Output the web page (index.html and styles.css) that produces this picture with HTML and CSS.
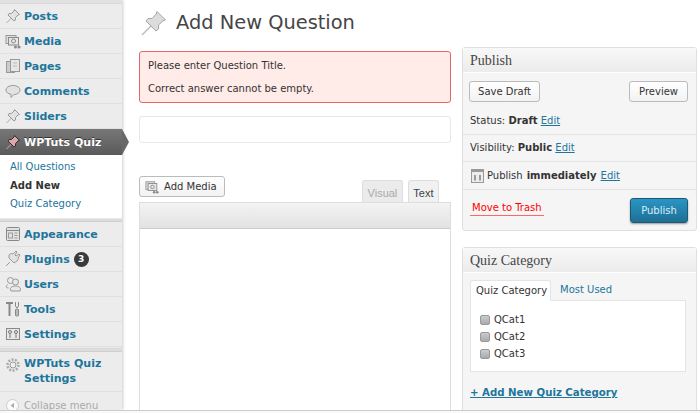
FILE: index.html
```html
<!DOCTYPE html>
<html lang="en">
<head>
  <meta charset="UTF-8" />
  <title>Add New Question</title>
  <link rel="stylesheet" href="styles.css">
</head>
<body>
<div class="page">
  <nav class="menu">
    <div class="menu-top"></div>
    <a class="item"><svg class="ico" viewBox="0 0 16 16"><path d="M1.500 15l5-5" stroke="#aaa"/><path d="M9.500 1.500l5 5-1.500.5-2.500 2.500v2.500l-1.500 1-6-6 1-1.500h2.500l2.500-2.500z" fill="#e2e2e2" stroke="#999"/></svg>Posts</a>
    <a class="item"><svg class="ico" viewBox="0 0 16 16"><rect x="1" y="2.500" width="10" height="8" fill="#ddd" stroke="#999"/><rect x="3.500" y="4.500" width="10" height="7.500" fill="#e6e6e6" stroke="#888"/><circle cx="8.500" cy="8" r="2" fill="none" stroke="#888"/><circle cx="10.500" cy="14" r="1.500" fill="#888"/><circle cx="14" cy="14" r="1.500" fill="#888"/></svg>Media</a>
    <a class="item"><svg class="ico" viewBox="0 0 16 16"><rect x="1.500" y="3.500" width="8" height="11" fill="#ccc" stroke="#999"/><rect x="5.500" y="1.500" width="9" height="12" fill="#e6e6e6" stroke="#999"/><path d="M8 5h4M8 8h4" stroke="#bbb"/></svg>Pages</a>
    <a class="item"><svg class="ico" viewBox="0 0 16 16"><path d="M8 2.500c4 0 7 2 7 4.500s-3 4.500-6 4.500l-3 3v-3.200c-3-.5-5-2-5-4.300 0-2.500 3-4.500 7-4.500z" fill="#e2e2e2" stroke="#999"/></svg>Comments</a>
    <a class="item"><svg class="ico" viewBox="0 0 16 16"><path d="M1.500 15l5-5" stroke="#aaa"/><path d="M9.500 1.500l5 5-1.500.5-2.500 2.500v2.500l-1.500 1-6-6 1-1.500h2.500l2.500-2.500z" fill="#e2e2e2" stroke="#999"/></svg>Sliders</a>
    <a class="item item-current"><svg class="ico" viewBox="0 0 16 16"><path d="M1.500 15l5-5" stroke="#c9b0b0"/><path d="M9.500 1.500l5 5-1.500.5-2.500 2.500v2.500l-1.500 1-6-6 1-1.500h2.500l2.500-2.500z" fill="#d9a9a9" stroke="#3a2a2a"/></svg>WPTuts Quiz</a>
    <div class="submenu">
      <a>All Questions</a>
      <a class="sub-on">Add New</a>
      <a>Quiz Category</a>
    </div>
    <div class="menu-sep"></div>
    <a class="item"><svg class="ico" viewBox="0 0 16 16"><rect x="1.500" y="1.500" width="13" height="13" rx="1" fill="#e2e2e2" stroke="#888"/><path d="M2 4.500h12" stroke="#888"/><rect x="3.500" y="7" width="4" height="5" fill="none" stroke="#999"/><path d="M9.500 7h3M9.500 9.500h3M9.500 12h3" stroke="#999"/></svg>Appearance</a>
    <a class="item"><svg class="ico" viewBox="0 0 16 16"><path d="M1 15l4-4" stroke="#999"/><path d="M4 7l5 5 3-2c2-2 1-3 1-3l2-3-1-1-3 2-1-1 2-3-1-1-3 3c-2-1-3 0-4 1z" fill="#e2e2e2" stroke="#999"/></svg>Plugins <span class="count">3</span></a>
    <a class="item"><svg class="ico" viewBox="0 0 16 16"><circle cx="5.500" cy="4.500" r="3" fill="none" stroke="#999"/><circle cx="10.500" cy="6" r="3" fill="#e8e8e8" stroke="#999"/><path d="M2.500 8.500c-2 2-1.500 3.500 1 3.500M6 15c-2-3 1-5 4.500-5s6 2 4.500 5z" fill="#e8e8e8" stroke="#999"/></svg>Users</a>
    <a class="item"><svg class="ico" viewBox="0 0 16 16"><path d="M1 2h7M4.500 2v13" stroke="#888" stroke-width="2" fill="none"/><rect x="10.500" y="8" width="3" height="7" rx="1" fill="#bbb" stroke="#888"/><path d="M10.500 1v4l1.500 2 1.500-2v-4" fill="none" stroke="#888"/></svg>Tools</a>
    <a class="item"><svg class="ico" viewBox="0 0 16 16"><rect x="1.500" y="2.500" width="13" height="11" fill="#e8e8e8" stroke="#888"/><circle cx="5" cy="6" r="1.500" fill="none" stroke="#777"/><path d="M5 8v4M11 8v4" stroke="#777"/><circle cx="11" cy="6" r="1.500" fill="none" stroke="#777"/></svg>Settings</a>
    <div class="menu-sep menu-sep-low"></div>
    <a class="item item-tall"><svg class="ico" viewBox="0 0 16 16"><circle cx="8" cy="8" r="5.500" fill="none" stroke="#aaa" stroke-width="2.500" stroke-dasharray="2 1.400"/><circle cx="8" cy="8" r="3" fill="#eee" stroke="#999"/></svg><span>WPTuts Quiz<br>Settings</span></a>
    <div class="collapse"><svg class="collapse-btn" viewBox="0 0 13 13"><circle cx="6.500" cy="6.500" r="6" fill="#fafafa" stroke="#ccc"/><path d="M8 4v5l-3.500-2.500z" fill="#aaa"/></svg>Collapse menu</div>
  </nav>

  <main class="main">
    <div class="head">
      <svg class="head-pin" viewBox="0 0 26 26"><path d="M1 25l9-9" stroke="#bbb" stroke-width="1.500"/><path d="M16 1.500l8.500 8.500-2.500.8-4.500 4.200v4l-2.500 2-10-10 2-2.500h4l4.200-4.500z" fill="#dcdcdc" stroke="#a5a5a5"/></svg>
      <h1>Add New Question</h1>
    </div>
    <div class="columns">
      <div class="col-left">
        <div class="error">
          <p>Please enter Question Title.</p>
          <p>Correct answer cannot be empty.</p>
        </div>
        <div class="title-box"></div>
        <div class="editor-tools">
          <button class="btn btn-media"><svg class="media-ico" viewBox="0 0 16 16"><rect x="1" y="2" width="10" height="9" fill="#ddd" stroke="#999"/><rect x="3.500" y="4" width="10" height="8" fill="#e8e8e8" stroke="#888"/><circle cx="8.500" cy="8" r="2" fill="none" stroke="#888"/><circle cx="10.500" cy="14" r="1.500" fill="#888"/><circle cx="14" cy="14" r="1.500" fill="#888"/></svg>Add Media</button>
          <div class="tabs">
            <span class="tab tab-off">Visual</span>
            <span class="tab">Text</span>
          </div>
        </div>
        <div class="editor">
          <div class="editor-bar"></div>
        </div>
      </div>
      <div class="col-right">
        <section class="box box-publish">
          <h3>Publish</h3>
          <div class="pub-actions">
            <button class="btn btn-draft">Save Draft</button>
            <button class="btn">Preview</button>
          </div>
          <div class="pub-row pub-status">Status: <b>Draft</b> <a>Edit</a></div>
          <div class="pub-row">Visibility: <b>Public</b> <a>Edit</a></div>
          <div class="pub-row pub-last"><svg class="cal" viewBox="0 0 13 15"><rect x=".5" y="1.500" width="12" height="13" fill="#ececec" stroke="#999"/><rect x="1" y="1" width="11" height="3" fill="#999"/><path d="M4 7v5.500M9 7v5.500" stroke="#666" stroke-width="1.200"/></svg>Publish <b>immediately</b> <a>Edit</a></div>
          <div class="pub-foot">
            <a class="trash">Move to Trash</a>
            <button class="btn-primary">Publish</button>
          </div>
        </section>
        <section class="box">
          <h3>Quiz Category</h3>
          <div class="cat-body">
            <div class="cat-tabs">
              <span class="cat-tab">Quiz Category</span>
              <a class="cat-link">Most Used</a>
            </div>
            <div class="cat-list">
              <label><span class="check"></span>QCat1</label>
              <label><span class="check"></span>QCat2</label>
              <label><span class="check"></span>QCat3</label>
            </div>
            <a class="cat-add">+ Add New Quiz Category</a>
          </div>
        </section>
      </div>
    </div>
  </main>
</div>
</body>
</html>
```

FILE: styles.css
```css
* {
  box-sizing: border-box;
}
html, body {
  margin: 0;
  height: 100%;
  overflow: hidden;
  background: #f9f9f9;
}
body {
  font-family: "DejaVu Sans", sans-serif;
  font-size: 10px;
  color: #333;
}
.page {
  display: flex;
  height: 411px;
  background: #fff;
  border-bottom: 1px solid #ccc;
  overflow: hidden;
}

/* sidebar */
.menu {
  width: 122px;
  flex: none;
  background: #ececec;
  box-shadow: 1px 0 3px #ccc;
  position: relative;
}
.menu-top {
  height: 4px;
  background: #e2e2e2;
  border-bottom: 1px solid #d8d8d8;
}
.item {
  display: flex;
  align-items: center;
  gap: 3px;
  height: 25px;
  padding-left: 5px;
  border-bottom: 1px solid #e0e0e0;
  font-size: 11px;
  font-weight: bold;
  color: #21759b;
}
.ico {
  width: 16px;
  height: 16px;
  flex: none;
}
.item-current {
  position: relative;
  height: 26px;
  background: linear-gradient(#777, #5a5a5a);
  color: #fff;
  border-bottom: 0;
  text-shadow: 0 -1px 0 #333;
}
.item-current::after {
  content: "";
  position: absolute;
  left: 122px;
  top: 0;
  border-left: 7px solid #686868;
  border-top: 13px solid transparent;
  border-bottom: 13px solid transparent;
}
.submenu {
  background: #fff;
  height: 63px;
  padding-top: 3px;
}
.submenu a {
  display: block;
  height: 18.500px;
  line-height: 18.500px;
  padding-left: 10px;
  color: #21759b;
}
.submenu .sub-on {
  color: #333;
  font-weight: bold;
}
.menu-sep {
  height: 4px;
  background: #dcdcdc;
  border-top: 1px solid #e8e8e8;
  border-bottom: 1px solid #d0d0d0;
}
.menu-sep-low {
  height: 5px;
}
.count {
  display: inline-block;
  width: 15px;
  height: 15px;
  margin-left: 1px;
  line-height: 15px;
  border-radius: 50%;
  background: #3a3a3a;
  color: #fff;
  font-size: 9px;
  text-align: center;
}
.item-tall {
  height: 40px;
  align-items: flex-start;
  padding-top: 5px;
  line-height: 14.500px;
}
.collapse {
  display: flex;
  align-items: center;
  gap: 5px;
  height: 19px;
  padding: 7px 0 0 6px;
  color: #aaa;
}
.collapse-btn {
  width: 13px;
  height: 13px;
  flex: none;
}

/* main */
.main {
  flex: 1;
  padding: 0 3px 0 17px;
  min-width: 0;
}
.head {
  display: flex;
  align-items: center;
  gap: 9px;
  height: 45px;
}
.head-pin {
  width: 26px;
  height: 26px;
  margin-left: 2px;
}
h1 {
  margin: 0;
  font-size: 19.400px;
  font-weight: normal;
  color: #464646;
}
.columns {
  display: flex;
  gap: 11px;
}
.col-left {
  width: 312px;
  flex: none;
}
.col-right {
  flex: 1;
}
.error {
  height: 52px;
  margin-top: 6px;
  padding: 2px 8px 0;
  background: #ffebe8;
  border: 1px solid #e06868;
  border-radius: 3px;
}
.error p {
  margin: 0;
  line-height: 23px;
}
.title-box {
  height: 27px;
  margin-top: 13px;
  border: 1px solid #e8e8e8;
  border-radius: 3px;
}
.editor-tools {
  display: flex;
  justify-content: space-between;
  align-items: flex-end;
  height: 26px;
  margin-top: 33px;
}
.btn {
  height: 21px;
  padding: 0 9px;
  font: 10px "DejaVu Sans", sans-serif;
  color: #333;
  background: linear-gradient(#fff, #f2f2f2);
  border: 1px solid #bbb;
  border-radius: 3px;
}
.btn-draft {
  width: 71px;
  padding: 0;
}
.btn-media {
  display: flex;
  align-items: center;
  gap: 5px;
  width: 86px;
  padding: 0 5px;
  margin-bottom: 5px;
  white-space: nowrap;
}
.media-ico {
  width: 14px;
  height: 14px;
  flex: none;
}
.tabs {
  display: flex;
  gap: 5px;
  margin-right: 12px;
}
.tab {
  height: 22px;
  padding: 0 4.500px;
  font: 11px/24px "Liberation Sans", sans-serif;
  background: #f1f1f1;
  border: 1px solid #ddd;
  border-bottom: 0;
  border-radius: 3px 3px 0 0;
  color: #444;
}
.tab-off {
  background: #ebebeb;
  color: #aaa;
}
.editor {
  height: 300px;
  border: 1px solid #ddd;
}
.editor-bar {
  height: 26px;
  background: linear-gradient(#f3f3f3, #e2e2e2);
  border-bottom: 1px solid #ccc;
}

/* right boxes */
.box {
  background: #f5f5f5;
  border: 1px solid #dfdfdf;
  border-radius: 3px;
  margin-top: 2px;
  margin-bottom: 16px;
}
.box-publish {
  height: 184px;
}
.box h3 {
  margin: 0;
  height: 25px;
  padding-left: 7px;
  font: normal 14px/25px "Liberation Serif", serif;
  color: #464646;
  background: linear-gradient(#f8f8f8, #ececec);
  border-bottom: 1px solid #fff;
}
.pub-actions {
  display: flex;
  justify-content: space-between;
  padding: 8px 8px 0 6px;
}
.pub-row {
  height: 27px;
  line-height: 26px;
  padding-left: 7px;
  border-bottom: 1px solid #e4e4e4;
}
.pub-status {
  height: 33px;
  padding-top: 6px;
}
.pub-last {
  display: flex;
  align-items: center;
  gap: 3px;
  height: 28px;
  padding-left: 8px;
}
.pub-last b, .pub-last a {
  margin-left: 1px;
}
.pub-row a {
  color: #21759b;
  text-decoration: underline;
}
.cal {
  width: 13px;
  height: 15px;
}
.pub-foot {
  display: flex;
  justify-content: space-between;
  height: 39px;
  padding: 8px 8px 0 7px;
}
.trash {
  align-self: flex-start;
  margin-top: 4px;
  padding: 0 2px 2px;
  color: #f00;
  border-bottom: 1px solid #f66;
}
.btn-primary {
  width: 58px;
  height: 25px;
  font: 10px "DejaVu Sans", sans-serif;
  color: #d8eef8;
  background: linear-gradient(#2a95c5, #1f6f94);
  border: 1px solid #1b5a78;
  border-radius: 3px;
  box-shadow: 0 1px 2px #999;
}
.cat-body {
  padding: 7px 10px 0 7px;
  height: 140px;
}
.cat-tabs {
  display: flex;
  height: 20px;
}
.cat-tab {
  width: 81px;
  padding-left: 5px;
  height: 21px;
  line-height: 20px;
  background: #fff;
  border: 1px solid #e4e4e4;
  border-bottom: 0;
  border-radius: 3px 3px 0 0;
  position: relative;
  z-index: 1;
}
.cat-link {
  padding-left: 9px;
  line-height: 20px;
  color: #21759b;
}
.cat-list {
  height: 72px;
  padding: 10px 0 0 9px;
  background: #fff;
  border: 1px solid #e4e4e4;
}
.cat-list label {
  display: flex;
  align-items: center;
  gap: 4px;
  height: 17px;
}
.check {
  width: 10px;
  height: 10px;
  border: 1px solid #999;
  border-radius: 2px;
  background: linear-gradient(#ccc, #aaa);
}
.cat-add {
  display: block;
  margin-top: 15px;
  font-weight: bold;
  font-size: 10.200px;
  color: #21759b;
  text-decoration: underline;
}
```
